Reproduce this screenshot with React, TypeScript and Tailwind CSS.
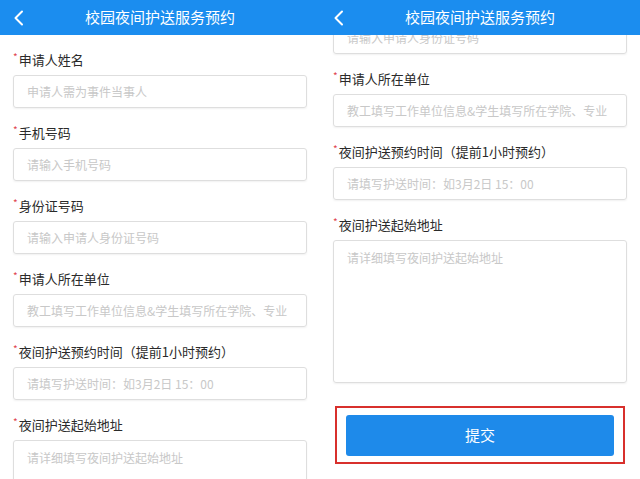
import React from "react";

const fields = [
  { label: "申请人姓名", ph: "申请人需为事件当事人" },
  { label: "手机号码", ph: "请输入手机号码" },
  { label: "身份证号码", ph: "请输入申请人身份证号码" },
  { label: "申请人所在单位", ph: "教工填写工作单位信息&学生填写所在学院、专业" },
  { label: "夜间护送预约时间（提前1小时预约）", ph: "请填写护送时间：如3月2日 15：00" },
];

function Label({ text }: { text: string }) {
  return (
    <div className="flex items-start h-[17px] leading-[17px] text-[13px] text-[#2a2a2a]">
      <span className="text-[#e0464f] text-[10px] leading-[12px] mr-[1px]">*</span>
      <span>{text}</span>
    </div>
  );
}

function Panel({ offset, withButton }: { offset: number; withButton?: boolean }) {
  return (
    <div className="w-[320px] h-full flex flex-col bg-white">
      <div className="h-[35px] shrink-0 bg-[#1b8def] flex items-center relative">
        <svg className="absolute left-[13px] top-[10px]" width="11" height="16" viewBox="0 0 11 16">
          <path d="M9 1.5 L2.5 8 L9 14.5" fill="none" stroke="white" strokeWidth="2" strokeLinecap="round" strokeLinejoin="round" />
        </svg>
        <div className="flex-1 text-center text-white text-[15px]">校园夜间护送服务预约</div>
      </div>
      <div className="flex-1 overflow-hidden">
        <div className="px-[13px] pt-[16px]" style={{ marginTop: -offset }}>
          {fields.map((f) => (
            <div key={f.label} className="mb-[16px]">
              <Label text={f.label} />
              <div className="mt-[7px] h-[33px] border border-[#dedede] rounded-[3px] shadow-[0_1px_2px_rgba(0,0,0,0.06)] flex items-center px-[13px] overflow-hidden">
                <span className="text-[12px] text-[#c8c8c8] whitespace-nowrap">{f.ph}</span>
              </div>
            </div>
          ))}
          <div>
            <Label text="夜间护送起始地址" />
            <div className="mt-[7px] h-[143px] border border-[#dedede] rounded-[3px] shadow-[0_1px_2px_rgba(0,0,0,0.06)] px-[13px] pt-[8px] text-[12px] leading-[18px]">
              <span className="text-[#c8c8c8] whitespace-nowrap">请详细填写夜间护送起始地址</span>
            </div>
          </div>
          {withButton && (
            <div className="mt-[23px] mx-[2px] border-2 border-[#d8302c] px-[9px] pt-[7px] pb-[6px]">
              <div className="h-[41px] bg-[#1e8aea] rounded-[3px] flex items-center justify-center text-white text-[15px]">
                提交
              </div>
            </div>
          )}
        </div>
      </div>
    </div>
  );
}

export default function App() {
  return (
    <div
      className="w-[640px] h-[479px] flex overflow-hidden bg-white"
      style={{ fontFamily: '"Noto Sans CJK SC", "Noto Sans", sans-serif' }}
    >
      <Panel offset={0} />
      <Panel offset={200} withButton />
    </div>
  );
}
